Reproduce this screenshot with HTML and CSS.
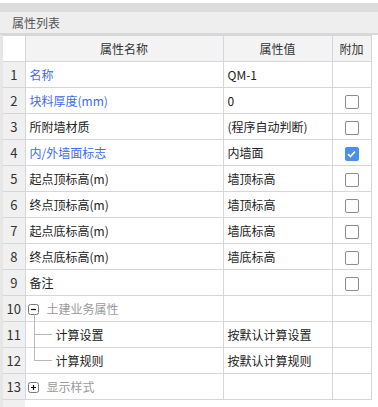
FILE: index.html
```html
<!DOCTYPE html>
<html lang="zh-CN">
<head>
    <meta charset="UTF-8">
    <meta name="viewport" content="width=device-width, initial-scale=1.0">
    <title>属性列表</title>
    <link rel="stylesheet" href="styles.css">
</head>
<body>

    <div class="panel">
        <div class="topStrip"></div>
        <div class="panelTitle">属性列表</div>

        <div class="gridArea">
            <table class="propTable">
                <colgroup>
                    <col class="colNum">
                    <col class="colName">
                    <col class="colValue">
                    <col class="colExtra">
                </colgroup>
                <thead>
                    <tr>
                        <th class="numCell headNum"></th>
                        <th>属性名称</th>
                        <th>属性值</th>
                        <th>附加</th>
                    </tr>
                </thead>
                <tbody>
                    <tr>
                        <td class="numCell">1</td>
                        <td class="name blue">名称</td>
                        <td class="value">QM-1</td>
                        <td class="extra"></td>
                    </tr>
                    <tr>
                        <td class="numCell">2</td>
                        <td class="name blue">块料厚度(mm)</td>
                        <td class="value">0</td>
                        <td class="extra"><span class="check"></span></td>
                    </tr>
                    <tr>
                        <td class="numCell">3</td>
                        <td class="name">所附墙材质</td>
                        <td class="value">(程序自动判断)</td>
                        <td class="extra"><span class="check"></span></td>
                    </tr>
                    <tr>
                        <td class="numCell">4</td>
                        <td class="name blue">内/外墙面标志</td>
                        <td class="value">内墙面</td>
                        <td class="extra">
                            <span class="check checked">
                                <svg width="9" height="8" viewBox="0 0 9 8"><path d="M1 4.2 L3.5 6.5 L8 1.5" fill="none" stroke="#fff" stroke-width="1.6"/></svg>
                            </span>
                        </td>
                    </tr>
                    <tr>
                        <td class="numCell">5</td>
                        <td class="name">起点顶标高(m)</td>
                        <td class="value">墙顶标高</td>
                        <td class="extra"><span class="check"></span></td>
                    </tr>
                    <tr>
                        <td class="numCell">6</td>
                        <td class="name">终点顶标高(m)</td>
                        <td class="value">墙顶标高</td>
                        <td class="extra"><span class="check"></span></td>
                    </tr>
                    <tr>
                        <td class="numCell">7</td>
                        <td class="name">起点底标高(m)</td>
                        <td class="value">墙底标高</td>
                        <td class="extra"><span class="check"></span></td>
                    </tr>
                    <tr>
                        <td class="numCell">8</td>
                        <td class="name">终点底标高(m)</td>
                        <td class="value">墙底标高</td>
                        <td class="extra"><span class="check"></span></td>
                    </tr>
                    <tr>
                        <td class="numCell">9</td>
                        <td class="name">备注</td>
                        <td class="value"></td>
                        <td class="extra"><span class="check"></span></td>
                    </tr>
                    <tr>
                        <td class="numCell">10</td>
                        <td class="name group">
                            <span class="toggle">
                                <svg width="11" height="11" viewBox="0 0 11 11"><rect x="0.5" y="0.5" width="10" height="10" rx="2" fill="#fff" stroke="#777"/><path d="M3 5.5 H8" stroke="#111" stroke-width="1.2"/></svg>
                            </span>土建业务属性
                            <span class="treeDown"></span>
                        </td>
                        <td class="value"></td>
                        <td class="extra"></td>
                    </tr>
                    <tr>
                        <td class="numCell">11</td>
                        <td class="name child">
                            <span class="treeBranch"></span>计算设置
                            <span class="treeThrough"></span>
                        </td>
                        <td class="value">按默认计算设置</td>
                        <td class="extra"></td>
                    </tr>
                    <tr>
                        <td class="numCell">12</td>
                        <td class="name child">
                            <span class="treeLast"></span>计算规则
                        </td>
                        <td class="value">按默认计算规则</td>
                        <td class="extra"></td>
                    </tr>
                    <tr>
                        <td class="numCell">13</td>
                        <td class="name group">
                            <span class="toggle">
                                <svg width="11" height="11" viewBox="0 0 11 11"><rect x="0.5" y="0.5" width="10" height="10" rx="2" fill="#fff" stroke="#777"/><path d="M3 5.5 H8 M5.5 3 V8" stroke="#111" stroke-width="1.2"/></svg>
                            </span>显示样式
                        </td>
                        <td class="value"></td>
                        <td class="extra"></td>
                    </tr>
                </tbody>
            </table>
        </div>
    </div>

</body>
</html>
```

FILE: styles.css
```css
body {
    margin: 0;
    background-color: #fff;
    font-family: "Noto Sans CJK SC", "Liberation Sans", sans-serif;
    font-size: 12px;
    color: #222;
}

.panel {
    display: flex;
    flex-direction: column;
    height: 407px;
    padding-top: 3px;
    box-sizing: border-box;
}

.topStrip {
    height: 9px;
    background-color: #dcdcdc;
}

.panelTitle {
    height: 21px;
    line-height: 22px;
    padding-left: 12px;
    background-color: #eeeeee;
    border-bottom: 2px solid #d8d8d8;
    color: #555;
}

.gridArea {
    flex: 1;
    /* gray row-number strip runs down to the bottom of the panel */
    background: linear-gradient(to right, #e6e6e6 3px, #f0f0f0 3px, #f0f0f0 25px, #fff 25px);
}

.propTable {
    margin-left: 3px;
    width: 368px;
    border-collapse: collapse;
    table-layout: fixed;
}

.colNum { width: 22px; }
.colName { width: 198px; }
.colValue { width: 109px; }
.colExtra { width: 39px; }

.propTable th,
.propTable td {
    height: 25px;
    padding: 0;
    border: 1px solid #d3d7dc;
    white-space: nowrap;
    overflow: visible;
}

.propTable th {
    font-weight: normal;
    color: #333;
    background-color: #f3f3f3;
    text-align: center;
}

.propTable th.headNum {
    background-color: #fff;
}

.numCell {
    background-color: #f0f0f0;
    text-align: center;
    font-size: 13px;
    color: #333;
    border-left: none !important;
}

.name {
    position: relative;
    padding-left: 4px !important;
}

.value {
    padding-left: 4px !important;
}

.extra {
    text-align: center;
}

.blue {
    color: #3a6cf2;
}

.group {
    color: #9a9a9a;
}

.toggle {
    display: inline-block;
    width: 11px;
    height: 11px;
    margin-left: -2px;
    margin-right: 8px;
    line-height: 0;
    vertical-align: -1px;
}

.child {
    padding-left: 30px !important;
}

/* tree connector lines */
.treeDown {
    position: absolute;
    left: 8px;
    top: 18px;
    height: 9px;
    border-left: 1px solid #b8b8b8;
}

.treeBranch,
.treeLast {
    position: absolute;
    left: 8px;
    width: 17px;
    border-left: 1px solid #b8b8b8;
    border-bottom: 1px solid #b8b8b8;
}

.treeBranch {
    top: -1px;
    height: 13px;
}

.treeThrough {
    position: absolute;
    left: 8px;
    top: 13px;
    height: 13px;
    border-left: 1px solid #b8b8b8;
}

.treeLast {
    top: -1px;
    height: 13px;
}

.check {
    display: inline-block;
    width: 12px;
    height: 12px;
    border: 1px solid #8c8c8c;
    border-radius: 2px;
    background-color: #fff;
    vertical-align: middle;
    line-height: 0;
}

.check.checked {
    border-color: #4a8fe8;
    background-color: #4a8fe8;
}

.check svg {
    margin-top: 2px;
}
```
